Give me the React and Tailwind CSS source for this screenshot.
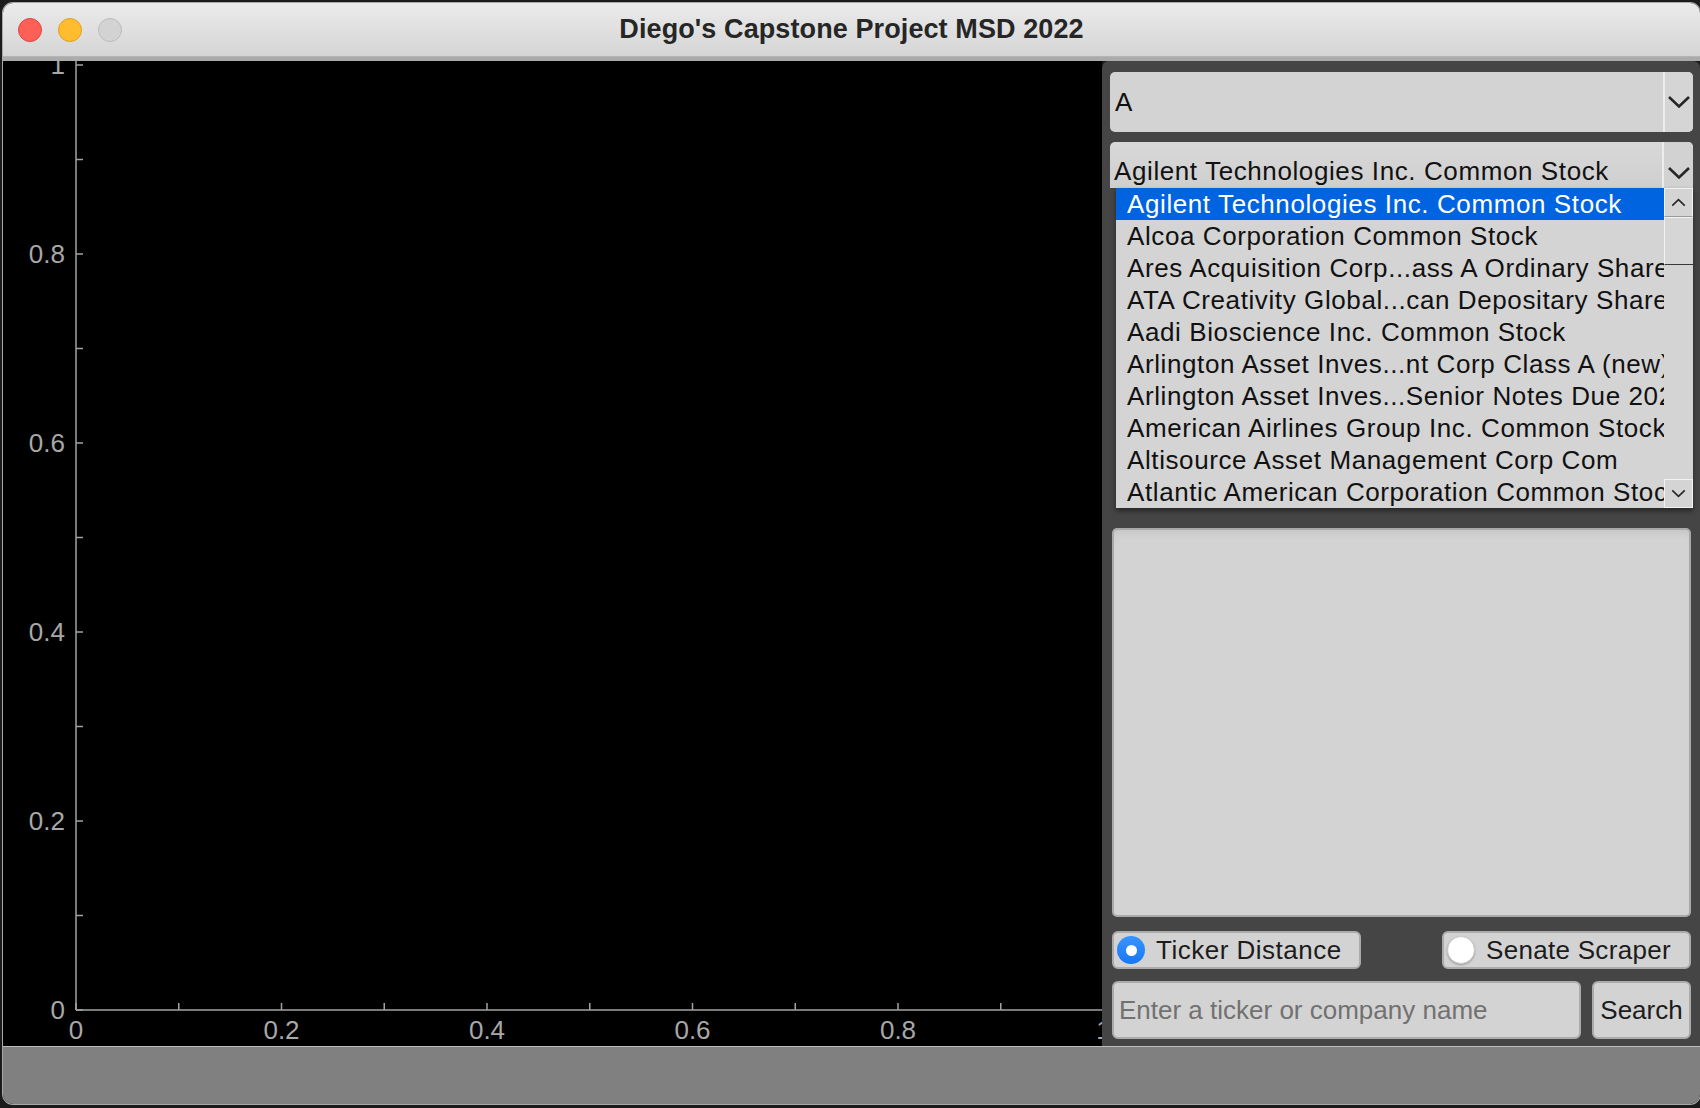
import React from 'react';

const STOCKS = [
  'Agilent Technologies Inc. Common Stock',
  'Alcoa Corporation Common Stock',
  'Ares Acquisition Corp...ass A Ordinary Shares',
  'ATA Creativity Global...can Depositary Shares',
  'Aadi Bioscience Inc. Common Stock',
  'Arlington Asset Inves...nt Corp Class A (new)',
  'Arlington Asset Inves...Senior Notes Due 2025',
  'American Airlines Group Inc. Common Stock',
  'Altisource Asset Management Corp Com',
  'Atlantic American Corporation Common Stock',
];

// plot geometry (svg coords inside the black panel)
const X0 = 73;
const Y0 = 949;
const DX = 102.75;
const DY = 94.5;

function Chevron({ up, w = 24, h = 14 }) {
  return (
    <svg width={w} height={h} viewBox="0 0 24 14">
      <path
        d={up ? 'M2 12 L12 2.5 L22 12' : 'M2 2 L12 11.5 L22 2'}
        fill="none"
        stroke="#262626"
        strokeWidth="2.6"
      />
    </svg>
  );
}

function Plot() {
  const ticks = Array.from({ length: 11 }, (_, i) => i);
  return (
    <svg width="1099" height="985" className="block">
      <line x1={X0} y1={0} x2={X0} y2={Y0} stroke="#a3a3a3" strokeWidth="1.5" />
      <line x1={X0} y1={Y0} x2={1099} y2={Y0} stroke="#a3a3a3" strokeWidth="1.5" />
      {ticks.map((k) => (
        <g key={k}>
          <line x1={X0} y1={Y0 - k * DY} x2={X0 + 7} y2={Y0 - k * DY} stroke="#a3a3a3" strokeWidth="1.5" />
          <line x1={X0 + k * DX} y1={Y0} x2={X0 + k * DX} y2={Y0 - 7} stroke="#a3a3a3" strokeWidth="1.5" />
          {k % 2 === 0 && (
            <>
              <text
                x={62}
                y={Y0 - k * DY}
                textAnchor="end"
                dominantBaseline="central"
                fontSize="26"
                fill="#a8a8a8"
                fontFamily="'Liberation Sans', sans-serif"
              >
                {k === 0 ? '0' : k === 10 ? '1' : (k / 10).toFixed(1)}
              </text>
              <text
                x={X0 + k * DX}
                y={969}
                textAnchor="middle"
                dominantBaseline="central"
                fontSize="26"
                fill="#a8a8a8"
                fontFamily="'Liberation Sans', sans-serif"
              >
                {k === 0 ? '0' : k === 10 ? '1' : (k / 10).toFixed(1)}
              </text>
            </>
          )}
        </g>
      ))}
    </svg>
  );
}

export default function App() {
  return (
    <div className="w-[1700px] h-[1108px] bg-[#1b1b1b] pt-[3px] pl-[3px] overflow-hidden font-['Liberation_Sans',Arial,sans-serif]">
      <div className="w-[1697px] h-[1101px] rounded-[10px] overflow-hidden flex flex-col shadow-[0_0_0_1px_#a8a8a8]">
        {/* title bar */}
        <div className="h-[54px] shrink-0 grid grid-cols-[1fr_auto_1fr] items-center bg-gradient-to-b from-[#ebebeb] to-[#d5d5d5] border-b border-[#b4b4b4]">
          <div className="flex items-center gap-[16px] pl-[15px]">
            <span className="w-[24px] h-[24px] rounded-full bg-[#fe5f57] border border-[#e1453f]"></span>
            <span className="w-[24px] h-[24px] rounded-full bg-[#febc2e] border border-[#dfa123]"></span>
            <span className="w-[24px] h-[24px] rounded-full bg-[#d3d3d3] border border-[#bcbcbc]"></span>
          </div>
          <div className="text-[27px] font-bold text-[#262626] tracking-[0.1px]">Diego's Capstone Project MSD 2022</div>
          <div></div>
        </div>
        <div className="h-[4px] shrink-0 bg-[#ababab]"></div>

        {/* main row */}
        <div className="h-[985px] shrink-0 flex">
          <div className="w-[1099px] bg-black overflow-hidden">
            <Plot />
          </div>

          <div className="flex-1 bg-[#454545] rounded-tl-[7px] rounded-tr-[7px] pt-[11px] pl-[8px] pr-[7px] flex flex-col">
            {/* ticker combo */}
            <div className="h-[60px] rounded-[5px] bg-[#d3d3d3] flex overflow-hidden">
              <div className="flex-1 flex items-center pl-[5px] text-[26px] text-[#111]">A</div>
              <div className="w-[30px] border-l-2 border-[#ededed] bg-[#d5d5d5] flex items-center justify-center">
                <Chevron />
              </div>
            </div>

            {/* company combo (open) */}
            <div className="mt-[10px] h-[46px] rounded-t-[5px] bg-gradient-to-b from-[#d8d8d8] to-[#cfcfcf] flex overflow-hidden">
              <div className="flex-1 flex items-end pb-[2px] pl-[4px] text-[26px] leading-[30px] tracking-[0.6px] text-[#111] whitespace-nowrap">
                Agilent Technologies Inc. Common Stock
              </div>
              <div className="w-[31px] border-l-2 border-[#ededed] bg-[#d2d2d2] flex items-end justify-center pb-[8px]">
                <Chevron />
              </div>
            </div>

            {/* dropdown list */}
            <div className="ml-[6px] h-[320px] bg-[#d4d4d4] flex relative z-10 shadow-[0_3px_5px_rgba(0,0,0,0.45)]">
              <div className="w-[548px] overflow-hidden">
                {STOCKS.map((s, i) => (
                  <div
                    key={s}
                    className={
                      i === 0
                        ? 'h-[32px] pl-[11px] leading-[32px] text-[26px] tracking-[0.6px] whitespace-nowrap bg-[#0064e1] text-white'
                        : 'h-[32px] pl-[11px] leading-[32px] text-[26px] tracking-[0.6px] whitespace-nowrap text-[#111]'
                    }
                  >
                    {s}
                  </div>
                ))}
              </div>
              <div className="flex-1 flex flex-col">
                <div className="h-[29px] border border-[#f2f2f2] border-b-[#9a9a9a] flex items-center justify-center">
                  <Chevron up w={15} h={9} />
                </div>
                <div className="h-[48px] border-l border-t border-[#f2f2f2] border-b border-b-[#3a3a3a] bg-[#d6d6d6]"></div>
                <div className="flex-1"></div>
                <div className="h-[29px] border border-[#f2f2f2] flex items-center justify-center">
                  <Chevron w={15} h={9} />
                </div>
              </div>
            </div>

            <div className="mx-[2px] flex flex-col">
              {/* output box */}
              <div className="mt-[20px] h-[389px] rounded-[5px] border-2 border-[#a9a9a9] bg-[#d3d3d3] shadow-[inset_0_8px_8px_-6px_rgba(0,0,0,0.08)]"></div>

              {/* mode radios */}
              <div className="mt-[14px] h-[38px] flex justify-between">
                <label className="w-[249px] rounded-[6px] border-2 border-[#ababab] bg-[#d3d3d3] flex items-center pl-[3px] gap-[11px] text-[26px] tracking-[0.5px] text-[#1c1c1c]">
                  <span className="w-[28px] h-[28px] rounded-full bg-gradient-to-b from-[#3a93ff] to-[#1478f2] flex items-center justify-center">
                    <span className="w-[11px] h-[11px] rounded-full bg-white"></span>
                  </span>
                  Ticker Distance
                </label>
                <label className="w-[249px] rounded-[6px] border-2 border-[#ababab] bg-[#d3d3d3] flex items-center pl-[3px] gap-[11px] text-[26px] tracking-[0.3px] text-[#1c1c1c]">
                  <span className="w-[28px] h-[28px] rounded-full bg-white border border-[#c8c8c8] shadow-[0_1px_2px_rgba(0,0,0,0.25)]"></span>
                  Senate Scraper
                </label>
              </div>

              {/* search */}
              <div className="mt-[12px] h-[58px] flex gap-[11px]">
                <input
                  placeholder="Enter a ticker or company name"
                  className="flex-1 min-w-0 rounded-[6px] border-2 border-[#ababab] bg-[#d3d3d3] pl-[5px] text-[26px] text-[#111] placeholder:text-[#717171] outline-none"
                />
                <button className="w-[99px] rounded-[6px] border-2 border-[#ababab] bg-[#d3d3d3] text-[26px] text-[#1c1c1c]">
                  Search
                </button>
              </div>
            </div>
          </div>
        </div>

        {/* status bar */}
        <div className="flex-1 bg-[#808080] border-t border-[#bdbdbd]"></div>
      </div>
    </div>
  );
}
